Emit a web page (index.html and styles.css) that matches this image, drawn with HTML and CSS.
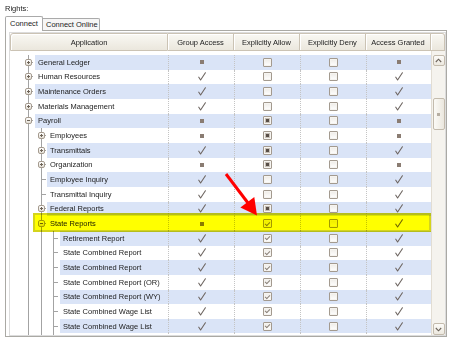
FILE: index.html
```html
<!DOCTYPE html>
<html>
<head>
<meta charset="utf-8">
<link rel="stylesheet" href="styles.css">
</head>
<body>
<svg class="defs" width="0" height="0" aria-hidden="true"><defs><symbol id="tick" viewBox="0 0 8 9"><path d="M0.8 5.2 L2.6 8 L7.4 0.8" fill="none" stroke="#6d6560" stroke-width="1.1" stroke-linejoin="round" stroke-linecap="round"/></symbol></defs></svg>
<div class="rights">Rights:</div>
<div class="tabs"><div class="tab active">Connect</div><div class="tab">Connect Online</div></div>
<div class="panel">
 <div class="grid">
  <div class="hdr">
   <div class="hc h-app">Application</div>
   <div class="hc h-col">Group Access</div>
   <div class="hc h-col">Explicitly Allow</div>
   <div class="hc h-col">Explicitly Deny</div>
   <div class="hc h-last">Access Granted</div>
   <div class="hc h-corner"></div>
  </div>
  <div class="body">
   <div class="rows">
    <div class="row a"><div class="app"><div class="tree"><span class="cn l0"><i class="bx p"></i></span></div><div class="nm">General Ledger</div></div><div class="c"><i class="sq"></i></div><div class="c"><i class="cb"></i></div><div class="c"><i class="cb"></i></div><div class="c last"><i class="sq"></i></div></div>
    <div class="row"><div class="app"><div class="tree"><span class="cn l0"><i class="bx p"></i></span></div><div class="nm">Human Resources</div></div><div class="c"><svg class="tk"><use href="#tick"/></svg></div><div class="c"><i class="cb"></i></div><div class="c"><i class="cb"></i></div><div class="c last"><svg class="tk"><use href="#tick"/></svg></div></div>
    <div class="row a"><div class="app"><div class="tree"><span class="cn l0"><i class="bx p"></i></span></div><div class="nm">Maintenance Orders</div></div><div class="c"><svg class="tk"><use href="#tick"/></svg></div><div class="c"><i class="cb"></i></div><div class="c"><i class="cb"></i></div><div class="c last"><svg class="tk"><use href="#tick"/></svg></div></div>
    <div class="row"><div class="app"><div class="tree"><span class="cn l0"><i class="bx p"></i></span></div><div class="nm">Materials Management</div></div><div class="c"><svg class="tk"><use href="#tick"/></svg></div><div class="c"><i class="cb"></i></div><div class="c"><i class="cb"></i></div><div class="c last"><svg class="tk"><use href="#tick"/></svg></div></div>
    <div class="row a"><div class="app"><div class="tree"><span class="cn l0"><i class="bx"></i></span></div><div class="nm">Payroll</div></div><div class="c"><i class="sq"></i></div><div class="c"><i class="cb ind"></i></div><div class="c"><i class="cb"></i></div><div class="c last"><i class="sq"></i></div></div>
    <div class="row"><div class="app"><div class="tree"><span class="g l0"></span><span class="cn l1"><i class="bx p"></i></span></div><div class="nm">Employees</div></div><div class="c"><i class="sq"></i></div><div class="c"><i class="cb ind"></i></div><div class="c"><i class="cb"></i></div><div class="c last"><i class="sq"></i></div></div>
    <div class="row a"><div class="app"><div class="tree"><span class="g l0"></span><span class="cn l1"><i class="bx p"></i></span></div><div class="nm">Transmittals</div></div><div class="c"><svg class="tk"><use href="#tick"/></svg></div><div class="c"><i class="cb ind"></i></div><div class="c"><i class="cb"></i></div><div class="c last"><svg class="tk"><use href="#tick"/></svg></div></div>
    <div class="row"><div class="app"><div class="tree"><span class="g l0"></span><span class="cn l1"><i class="bx p"></i></span></div><div class="nm">Organization</div></div><div class="c"><i class="sq"></i></div><div class="c"><i class="cb ind"></i></div><div class="c"><i class="cb"></i></div><div class="c last"><i class="sq"></i></div></div>
    <div class="row a"><div class="app"><div class="tree"><span class="g l0"></span><span class="cn l1"></span></div><div class="nm">Employee Inquiry</div></div><div class="c"><svg class="tk"><use href="#tick"/></svg></div><div class="c"><i class="cb"></i></div><div class="c"><i class="cb"></i></div><div class="c last"><svg class="tk"><use href="#tick"/></svg></div></div>
    <div class="row"><div class="app"><div class="tree"><span class="g l0"></span><span class="cn l1"></span></div><div class="nm">Transmittal Inquiry</div></div><div class="c"><svg class="tk"><use href="#tick"/></svg></div><div class="c"><i class="cb"></i></div><div class="c"><i class="cb"></i></div><div class="c last"><svg class="tk"><use href="#tick"/></svg></div></div>
    <div class="row a"><div class="app"><div class="tree"><span class="g l0"></span><span class="cn l1"><i class="bx p"></i></span></div><div class="nm">Federal Reports</div></div><div class="c"><svg class="tk"><use href="#tick"/></svg></div><div class="c"><i class="cb ind"></i></div><div class="c"><i class="cb"></i></div><div class="c last"><svg class="tk"><use href="#tick"/></svg></div></div>
    <div class="row"><div class="app"><div class="tree"><span class="g l0"></span><span class="cn l1"><i class="bx"></i></span></div><div class="nm">State Reports</div></div><div class="c"><i class="sq"></i></div><div class="c"><i class="cb on"></i></div><div class="c"><i class="cb"></i></div><div class="c last"><svg class="tk"><use href="#tick"/></svg></div></div>
    <div class="row a"><div class="app"><div class="tree"><span class="g l0"></span><span class="g l1"></span><span class="cn l2"></span></div><div class="nm">Retirement Report</div></div><div class="c"><svg class="tk"><use href="#tick"/></svg></div><div class="c"><i class="cb on"></i></div><div class="c"><i class="cb"></i></div><div class="c last"><svg class="tk"><use href="#tick"/></svg></div></div>
    <div class="row"><div class="app"><div class="tree"><span class="g l0"></span><span class="g l1"></span><span class="cn l2"></span></div><div class="nm">State Combined Report</div></div><div class="c"><svg class="tk"><use href="#tick"/></svg></div><div class="c"><i class="cb on"></i></div><div class="c"><i class="cb"></i></div><div class="c last"><svg class="tk"><use href="#tick"/></svg></div></div>
    <div class="row a"><div class="app"><div class="tree"><span class="g l0"></span><span class="g l1"></span><span class="cn l2"></span></div><div class="nm">State Combined Report</div></div><div class="c"><svg class="tk"><use href="#tick"/></svg></div><div class="c"><i class="cb on"></i></div><div class="c"><i class="cb"></i></div><div class="c last"><svg class="tk"><use href="#tick"/></svg></div></div>
    <div class="row"><div class="app"><div class="tree"><span class="g l0"></span><span class="g l1"></span><span class="cn l2"></span></div><div class="nm">State Combined Report (OR)</div></div><div class="c"><svg class="tk"><use href="#tick"/></svg></div><div class="c"><i class="cb on"></i></div><div class="c"><i class="cb"></i></div><div class="c last"><svg class="tk"><use href="#tick"/></svg></div></div>
    <div class="row a"><div class="app"><div class="tree"><span class="g l0"></span><span class="g l1"></span><span class="cn l2"></span></div><div class="nm">State Combined Report (WY)</div></div><div class="c"><svg class="tk"><use href="#tick"/></svg></div><div class="c"><i class="cb on"></i></div><div class="c"><i class="cb"></i></div><div class="c last"><svg class="tk"><use href="#tick"/></svg></div></div>
    <div class="row"><div class="app"><div class="tree"><span class="g l0"></span><span class="g l1"></span><span class="cn l2"></span></div><div class="nm">State Combined Wage List</div></div><div class="c"><svg class="tk"><use href="#tick"/></svg></div><div class="c"><i class="cb on"></i></div><div class="c"><i class="cb"></i></div><div class="c last"><svg class="tk"><use href="#tick"/></svg></div></div>
    <div class="row a"><div class="app"><div class="tree"><span class="g l0"></span><span class="g l1"></span><span class="cn l2"></span></div><div class="nm">State Combined Wage List</div></div><div class="c"><svg class="tk"><use href="#tick"/></svg></div><div class="c"><i class="cb on"></i></div><div class="c"><i class="cb"></i></div><div class="c last"><svg class="tk"><use href="#tick"/></svg></div></div>
    <div class="row"><div class="app"><div class="tree"><span class="g l0"></span><span class="g l1"></span><span class="cn l2"></span></div><div class="nm"></div></div><div class="c"></div><div class="c"></div><div class="c"></div><div class="c last"></div></div>
   </div>
   <div class="vscroll">
    <div class="sbtn"><svg width="7" height="5" viewBox="0 0 7 5"><polyline points="0.8,4 3.5,1.2 6.2,4" fill="none" stroke="#6a625a" stroke-width="1.1"/></svg></div>
    <div class="thumb"><span class="grip"></span></div>
    <div class="sbtn down"><svg width="7" height="5" viewBox="0 0 7 5"><polyline points="0.8,1 3.5,3.8 6.2,1" fill="none" stroke="#6a625a" stroke-width="1.1"/></svg></div>
   </div>
  </div>
 </div>
</div>
<div class="hilite"></div>
<svg class="arrow" width="45" height="52" viewBox="0 0 45 52"><line x1="6" y1="6" x2="28" y2="35" stroke="#ff0000" stroke-width="3"/><polygon points="20.4,39.5 34.3,29 37,47.5" fill="#ff0000"/></svg>
</body>
</html>
```

FILE: styles.css
```css
* { box-sizing: border-box; }
html, body { margin: 0; padding: 0; background: #fff; }
body {
  font-family: "Liberation Sans", Arial, sans-serif;
  font-size: 7.5px;
  color: #1c1c1c;
  width: 451px;
  height: 344px;
  overflow: hidden;
  position: relative;
}
.defs { position: absolute; width: 0; height: 0; overflow: hidden; }

.rights { height: 16px; padding: 4px 0 0 5px; line-height: 10px; }

.tabs {
  display: flex;
  align-items: flex-end;
  height: 14px;
  margin-left: 5px;
  position: relative;
  z-index: 1;
}
.tab {
  width: 57px;
  height: 12px;
  border: 1px solid #aaa;
  border-left: none;
  border-bottom: none;
  border-radius: 0 2px 0 0;
  background: #f6f6f6;
  padding: 0 0 0 3px;
  line-height: 11px;
  white-space: nowrap;
}
.tab.active {
  width: 38px;
  height: 15px;
  margin-bottom: -1px;
  border-left: 1px solid #aaa;
  border-radius: 2px 2px 0 0;
  background: #fff;
  padding-left: 4px;
  line-height: 13px;
}

.panel {
  width: 442px;
  height: 307px;
  margin-left: 5px;
  border: 1px solid #aaa9a4;
  padding: 1px 0 0 3px;
  background: #fff;
}
.grid {
  width: 437px;
  height: 304px;
  border: 1px solid #dcdcdc;
  display: flex;
  flex-direction: column;
  background: #fff;
}

.hdr { display: flex; height: 18px; flex: none; }
.hc {
  height: 18px;
  display: flex;
  align-items: center;
  justify-content: center;
  border: 1px solid #cbc3b4;
  border-left: none;
  background: linear-gradient(#f9f8f3, #ebe7dd);
  box-shadow: inset 1px 1px 0 #fff;
  white-space: nowrap;
  color: #222;
  flex: none;
}
.h-app { width: 158px; border-left: 1px solid #cbc3b4; border-radius: 3px 0 0 0; }
.h-col { width: 66px; }
.h-last { width: 65px; }
.h-corner { width: 14px; border-radius: 0 3px 0 0; }

.body { flex: 1; min-height: 0; display: flex; overflow: hidden; }
.rows { width: 421px; flex: none; padding-top: 4px; overflow: hidden; }

.row { display: flex; height: 14.667px; background: #fff; }
.row.a { background: #dae4f7; }

.app { width: 158px; flex: none; display: flex; }
.tree { display: flex; padding-left: 12px; background: #fff; flex: none; }
.g, .cn {
  flex: none;
  background: linear-gradient(#a3a3a3, #a3a3a3) 6px 0 / 1px 100% no-repeat;
}
.cn {
  display: flex;
  align-items: center;
  background:
    linear-gradient(#a3a3a3, #a3a3a3) 6px 0 / 1px 100% no-repeat,
    linear-gradient(#a3a3a3, #a3a3a3) 7px 50% / 4px 1px no-repeat;
}
.l0, .l2 { width: 13px; }
.l1 { width: 12px; }

.bx {
  display: block;
  width: 7px;
  height: 7px;
  margin-left: 3px;
  border: 1px solid #a59b8f;
  border-radius: 2px;
  background:
    linear-gradient(#6e6458, #6e6458) center / 3px 1px no-repeat,
    linear-gradient(#fff, #e3ded5);
}
.bx.p {
  background:
    linear-gradient(#6e6458, #6e6458) center / 3px 1px no-repeat,
    linear-gradient(#6e6458, #6e6458) center / 1px 3px no-repeat,
    linear-gradient(#fff, #e3ded5);
}

.nm {
  flex: 1;
  padding-left: 3px;
  display: flex;
  align-items: center;
  white-space: nowrap;
  overflow: hidden;
}

.c {
  width: 66px;
  flex: none;
  border-left: 1px dotted #c4c4c4;
  display: flex;
  align-items: center;
  justify-content: center;
}
.c.last { width: 65px; }

.sq { display: block; width: 4px; height: 4px; background: #8a7c72; }
.tk { display: block; width: 8px; height: 9px; }

.cb {
  display: flex;
  align-items: center;
  justify-content: center;
  width: 9px;
  height: 9px;
  border: 1px solid #a39a8f;
  border-radius: 1px;
  background: linear-gradient(#eeebe6, #fff);
  box-shadow: inset 0 0 0 1px #f6f4f0;
}
.cb.ind::after {
  content: "";
  width: 3px;
  height: 3px;
  background: #584e47;
  box-shadow: 0 0 0 1px #c6bfb6;
}
.cb.on::after {
  content: "";
  width: 2px;
  height: 4px;
  margin-top: -1px;
  border: solid #8c837a;
  border-width: 0 1px 1px 0;
  transform: rotate(45deg);
}

.vscroll {
  width: 14px;
  flex: none;
  background: #f5f3ee;
  border-left: 1px solid #e2ddd3;
  display: flex;
  flex-direction: column;
  align-items: center;
  padding-top: 4px;
}
.sbtn {
  width: 12px;
  height: 11px;
  flex: none;
  border: 1px solid #c3bbad;
  border-radius: 2px;
  background: linear-gradient(#fcfbf8, #ece8df);
  display: flex;
  align-items: center;
  justify-content: center;
}
.sbtn.down { margin-top: auto; height: 12px; }
.thumb {
  width: 12px;
  height: 32px;
  flex: none;
  margin-top: 32px;
  border: 1px solid #c3bbad;
  border-radius: 2px;
  background: linear-gradient(90deg, #fbfaf6, #ebe7de);
  display: flex;
  align-items: center;
  justify-content: center;
}
.grip { display: block; width: 3px; height: 3px; background: #b6aea2; }

.hilite {
  position: absolute;
  left: 33px;
  top: 213px;
  width: 398px;
  height: 19px;
  border: 2px solid #d4d41c;
  background: #ffff00;
  mix-blend-mode: multiply;
}
.arrow { position: absolute; left: 220px; top: 168px; }
```
